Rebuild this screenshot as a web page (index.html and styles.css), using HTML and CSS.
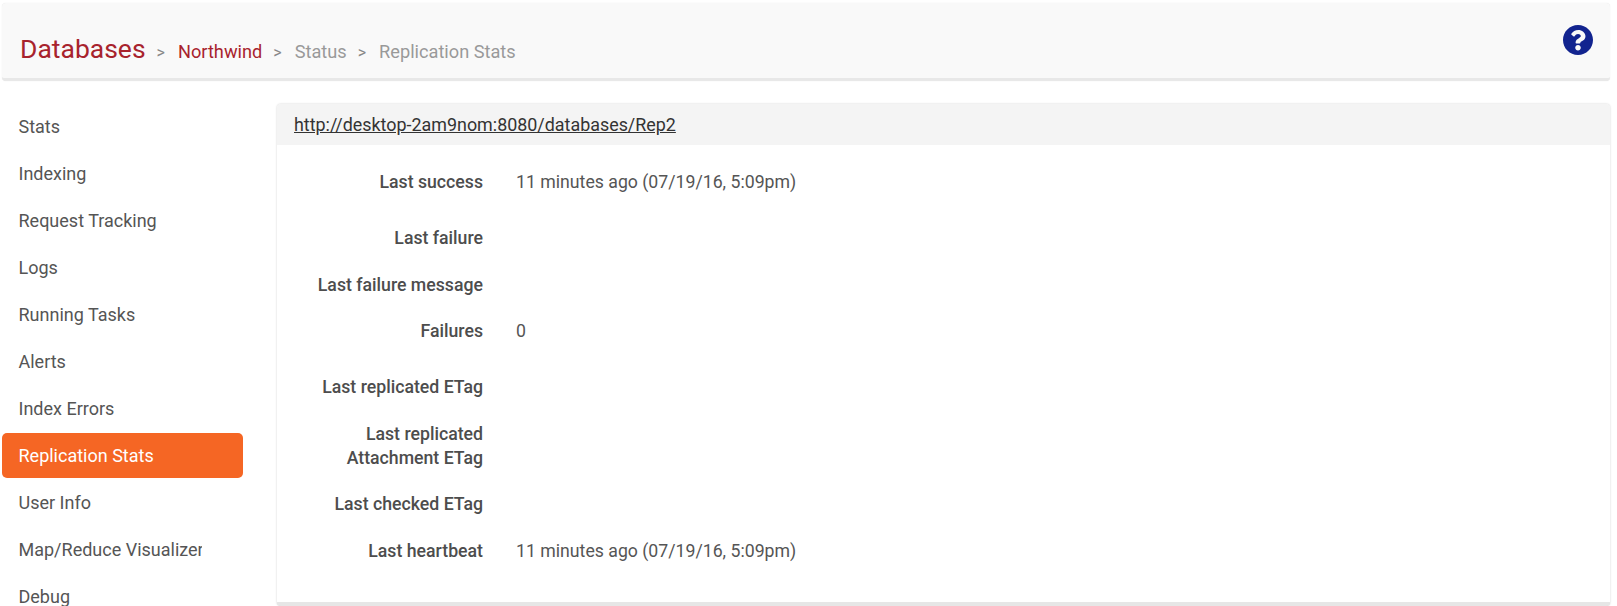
FILE: index.html
```html
<!DOCTYPE html>
<html lang="en">
<head>
  <title>Replication Stats</title>
  <meta charset="UTF-8">
  <link rel="stylesheet" href="styles.css">
</head>
<body>
  <div id="strona">
    <div class="gora">
      <div class="okruszki">
        <a class="baza" href="#">Databases</a>
        <span class="sep">&gt;</span>
        <a class="czerw" href="#">Northwind</a>
        <span class="sep">&gt;</span>
        <span class="szary">Status</span>
        <span class="sep">&gt;</span>
        <span class="szary">Replication Stats</span>
      </div>
      <svg class="pomoc" viewBox="8 8 496 496" aria-hidden="true">
        <path fill="#12248f" d="M504 256c0 136.997-111.043 248-248 248S8 392.997 8 256C8 119.083 119.043 8 256 8s248 111.083 248 248zM262.655 90c-54.497 0-89.255 22.957-116.549 63.758-3.536 5.286-2.353 12.415 2.715 16.258l34.699 26.31c5.205 3.947 12.621 3.008 16.665-2.122 17.864-22.658 30.113-35.797 57.303-35.797 20.429 0 45.698 13.148 45.698 32.958 0 14.976-12.363 22.667-32.534 33.976C247.128 238.528 216 254.941 216 296v4c0 6.627 5.373 12 12 12h56c6.627 0 12-5.373 12-12v-1.333c0-28.462 83.186-29.647 83.186-106.667 0-58.002-60.165-102-116.531-102zM256 338c-25.365 0-46 20.635-46 46 0 25.364 20.635 46 46 46s46-20.636 46-46c0-25.365-20.635-46-46-46z"/>
      </svg>
    </div>
    <div class="uklad">
      <ul class="menu">
        <li><a href="#">Stats</a></li>
        <li><a href="#">Indexing</a></li>
        <li><a href="#">Request Tracking</a></li>
        <li><a href="#">Logs</a></li>
        <li><a href="#">Running Tasks</a></li>
        <li><a href="#">Alerts</a></li>
        <li><a href="#">Index Errors</a></li>
        <li><a class="aktywny" href="#">Replication Stats</a></li>
        <li><a href="#">User Info</a></li>
        <li><a href="#"><span class="uciety">Map/Reduce Visualizer</span></a></li>
        <li><a href="#">Debug</a></li>
      </ul>
      <div class="panel">
        <div class="panel-gora"><a href="#">http://desktop-2am9nom:8080/databases/Rep2</a></div>
        <div class="panel-tresc">
          <div class="wiersz z-wartoscia">
            <div class="etykieta">Last success</div>
            <div class="wartosc">11 minutes ago (07/19/16, 5:09pm)</div>
          </div>
          <div class="wiersz">
            <div class="etykieta">Last failure</div>
          </div>
          <div class="wiersz">
            <div class="etykieta">Last failure message</div>
          </div>
          <div class="wiersz z-wartoscia">
            <div class="etykieta">Failures</div>
            <div class="wartosc">0</div>
          </div>
          <div class="wiersz">
            <div class="etykieta">Last replicated ETag</div>
          </div>
          <div class="wiersz">
            <div class="etykieta">Last replicated<br>Attachment ETag</div>
          </div>
          <div class="wiersz">
            <div class="etykieta">Last checked ETag</div>
          </div>
          <div class="wiersz z-wartoscia">
            <div class="etykieta">Last heartbeat</div>
            <div class="wartosc">11 minutes ago (07/19/16, 5:09pm)</div>
          </div>
        </div>
      </div>
    </div>
  </div>
</body>
</html>
```

FILE: styles.css
```css
* {
  box-sizing: border-box;
}

html, body {
  height: 100%;
  margin: 0;
  padding: 0;
  overflow: hidden;
}

body {
  background-color: #fff;
  font-family: Roboto, "Liberation Sans", sans-serif;
  font-size: 17.7px;
  line-height: 24px;
  color: #555;
}

a {
  color: inherit;
  text-decoration: none;
}

#strona {
  padding: 3px 7px 0 2px;
}

.gora {
  height: 78px;
  background-color: #f9f9f9;
  border-radius: 4px;
  box-shadow: 0 0 1px rgba(0, 0, 0, 0.12);
  border-bottom: 3px solid #e8e8e8;
  padding: 0 18px;
  display: flex;
  justify-content: space-between;
  align-items: flex-start;
}

.okruszki {
  margin-top: 31px;
  display: flex;
  align-items: baseline;
  color: #999;
  font-size: 18.2px;
}

.baza {
  font-size: 26.5px;
  line-height: 30px;
  color: #a8232d;
}

.czerw {
  color: #a8232d;
}

.sep {
  font-size: 16px;
  color: #888;
  margin: 0 13px 0 11px;
}

.pomoc {
  width: 30px;
  height: 30px;
  margin-top: 22px;
  margin-right: -1px;
}

.uklad {
  display: flex;
  margin-top: 23px;
  align-items: flex-start;
}

.menu {
  list-style: none;
  margin: 0;
  padding: 0;
  width: 241px;
  flex-shrink: 0;
  font-size: 18px;
}

.menu a {
  display: block;
  height: 45px;
  margin-bottom: 2px;
  padding: 11px 16.5px;
  border-radius: 5px;
  color: #555;
}

.menu a.aktywny {
  background-color: #f56624;
  color: #fff;
}

.uciety {
  display: block;
  width: 183px;
  overflow: hidden;
  white-space: nowrap;
}

.panel {
  flex: 1;
  margin-left: 34px;
  border-radius: 4px;
  box-shadow: 0 0 2px rgba(0, 0, 0, 0.22);
  border-bottom: 4px solid #e6e6e6;
  height: 502px;
  background-color: #fff;
}

.panel-gora {
  height: 41px;
  background-color: #f4f4f4;
  padding: 9px 17px;
  font-size: 17.9px;
  color: #333;
  border-radius: 4px 4px 0 0;
}

.panel-gora a {
  text-decoration: underline;
}

.panel-tresc {
  padding-top: 18px;
}

.wiersz {
  display: flex;
  margin-bottom: 14.8px;
  min-height: 32px;
}

.z-wartoscia {
  min-height: 41px;
}

.etykieta {
  width: 206px;
  padding-top: 7px;
  text-align: right;
  font-weight: 500;
  color: #4d4d4d;
}

.wartosc {
  padding-top: 7px;
  margin-left: 33px;
  color: #555;
}
```
